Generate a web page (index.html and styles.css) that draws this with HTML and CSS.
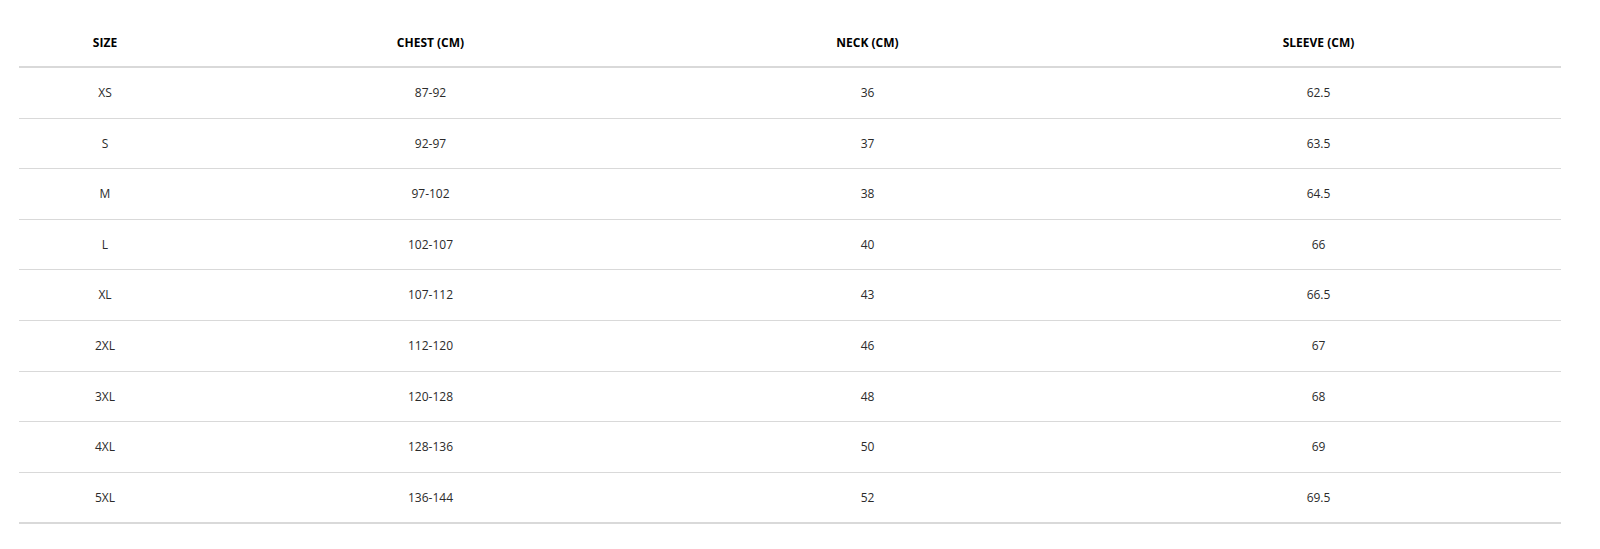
FILE: index.html
```html
<!DOCTYPE html>
<html lang="en">
<head>
<meta charset="utf-8">
<title>Size chart</title>
<link rel="stylesheet" href="styles.css">
</head>
<body>
<div class="wrap">
  <table class="size-table">
    <colgroup>
      <col class="c1"><col class="c2"><col class="c3"><col class="c4">
    </colgroup>
    <thead>
      <tr><th>SIZE</th><th>CHEST (CM)</th><th>NECK (CM)</th><th class="last">SLEEVE (CM)</th></tr>
    </thead>
    <tbody>
      <tr><td>XS</td><td>87-92</td><td>36</td><td class="last">62.5</td></tr>
      <tr><td>S</td><td>92-97</td><td>37</td><td class="last">63.5</td></tr>
      <tr><td>M</td><td>97-102</td><td>38</td><td class="last">64.5</td></tr>
      <tr><td>L</td><td>102-107</td><td>40</td><td class="last">66</td></tr>
      <tr><td>XL</td><td>107-112</td><td>43</td><td class="last">66.5</td></tr>
      <tr><td>2XL</td><td>112-120</td><td>46</td><td class="last">67</td></tr>
      <tr><td>3XL</td><td>120-128</td><td>48</td><td class="last">68</td></tr>
      <tr><td>4XL</td><td>128-136</td><td>50</td><td class="last">69</td></tr>
      <tr class="end"><td>5XL</td><td>136-144</td><td>52</td><td class="last">69.5</td></tr>
    </tbody>
  </table>
</div>
</body>
</html>
```
FILE: styles.css
```css
html, body {
  margin: 0;
  padding: 0;
  background: #ffffff;
}
.wrap {
  padding: 19px 0 0 19px;
}
.size-table {
  width: 1542px;
  table-layout: fixed;
  border-collapse: separate;
  border-spacing: 0;
  font-family: "Open Sans", "Liberation Sans", sans-serif;
}
.c1 { width: 172px; }
.c2 { width: 479px; }
.c3 { width: 395px; }
.c4 { width: 496px; }
.size-table th {
  padding: 0;
  font-size: 12px;
  font-weight: 700;
  color: #000000;
  line-height: 47px;
  text-align: center;
  border-bottom: 2px solid #d9d9d9;
}
.size-table td {
  padding: 0;
  font-size: 12px;
  font-weight: 400;
  color: #2b2b2b;
  line-height: 49.6px;
  text-align: center;
  border-bottom: 1px solid #d9d9d9;
}
.size-table .last {
  padding-left: 11px;
}
.size-table tr.end td {
  border-bottom-width: 2px;
}
```
